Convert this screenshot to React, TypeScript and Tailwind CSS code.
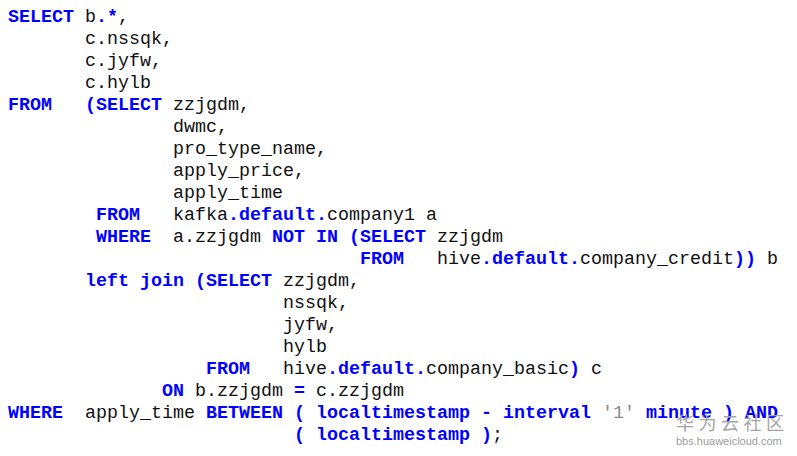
import React from "react";

// {...} = keyword / operator (blue bold), [...] = literal (gray)
const lines = [
  "{SELECT} b{.*},",
  "       c.nssqk,",
  "       c.jyfw,",
  "       c.hylb",
  "{FROM}   {(SELECT} zzjgdm,",
  "               dwmc,",
  "               pro_type_name,",
  "               apply_price,",
  "               apply_time",
  "        {FROM}   kafka{.default.}company1 a",
  "        {WHERE}  a.zzjgdm {NOT IN (SELECT} zzjgdm",
  "                                {FROM}   hive{.default.}company_credit{))} b",
  "       {left join (SELECT} zzjgdm,",
  "                         nssqk,",
  "                         jyfw,",
  "                         hylb",
  "                  {FROM}   hive{.default.}company_basic{)} c",
  "              {ON} b.zzjgdm {=} c.zzjgdm",
  "{WHERE}  apply_time {BETWEEN ( localtimestamp - interval} ['1'] {minute ) AND}",
  "                          {( localtimestamp )};",
];

function renderLine(line: string) {
  const parts = line.split(/(\{[^}]*\}|\[[^\]]*\])/).filter(Boolean);
  return parts.map((p, i) => {
    if (p.startsWith("{")) {
      return (
        <span key={i} className="font-bold text-[#0000ff]">
          {p.slice(1, -1)}
        </span>
      );
    }
    if (p.startsWith("[")) {
      return (
        <span key={i} className="text-[#8a8a8a]">
          {p.slice(1, -1)}
        </span>
      );
    }
    return <span key={i}>{p}</span>;
  });
}

export default function App() {
  return (
    <div className="relative w-[797px] h-[456px] bg-white overflow-hidden">
      <pre className="pt-[7px] pl-[8px] m-0 text-[18.33px] leading-[22px] text-[#111] font-['Liberation_Mono',monospace]">
        {lines.map((l, i) => (
          <div key={i} className="h-[22px] whitespace-pre">
            {renderLine(l)}
          </div>
        ))}
      </pre>

      {/* watermark */}
      <div className="absolute left-[676px] top-[413px] flex flex-col items-start pointer-events-none">
        <div className="text-[18px] leading-none tracking-[4.5px] text-[#a5a5a5] font-['Noto_Sans_CJK_SC',sans-serif]">
          华为云社区
        </div>
        <div className="mt-[5px] text-[11px] leading-none text-[#9c9c9c] font-['Liberation_Sans',sans-serif]">
          bbs.huaweicloud.com
        </div>
      </div>
    </div>
  );
}
